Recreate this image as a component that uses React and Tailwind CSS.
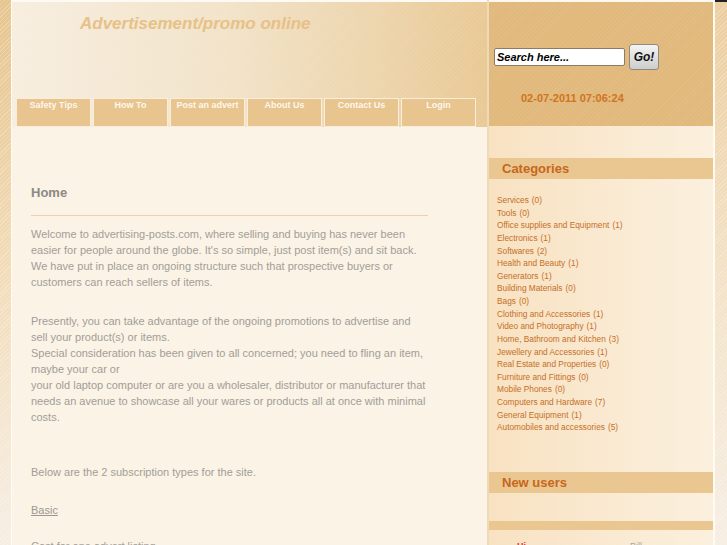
import React from "react";

const navItems = ["Safety Tips", "How To", "Post an advert", "About Us", "Contact Us", "Login"];

const categories = [
  ["Services", 0],
  ["Tools", 0],
  ["Office supplies and Equipment", 1],
  ["Electronics", 1],
  ["Softwares", 2],
  ["Health and Beauty", 1],
  ["Generators", 1],
  ["Building Materials", 0],
  ["Bags", 0],
  ["Clothing and Accessories", 1],
  ["Video and Photography", 1],
  ["Home, Bathroom and Kitchen", 3],
  ["Jewellery and Accessories", 1],
  ["Real Estate and Properties", 0],
  ["Furniture and Fittings", 0],
  ["Mobile Phones", 0],
  ["Computers and Hardware", 7],
  ["General Equipment", 1],
  ["Automobiles and accessories", 5],
];

export default function App() {
  return (
    <div className="w-[727px] h-[545px] overflow-hidden flex bg-[#f7eee0] font-['Liberation_Sans',Arial,sans-serif]">
      {/* left strip */}
      <div className="w-[11px] shrink-0 h-full bg-gradient-to-b from-[#e6c48d] via-[#f2dcb9] to-[#f6eee3]">
        <div className="w-full h-full [background-image:repeating-linear-gradient(135deg,rgba(255,255,255,0.22)_0px,rgba(255,255,255,0.22)_1px,transparent_1px,transparent_3px)]" />
      </div>
      <div className="w-[1px] shrink-0 h-full bg-[#fffaf2]" />

      {/* main column */}
      <div className="w-[475px] shrink-0 h-full flex flex-col overflow-hidden">
        <div className="h-[2px] shrink-0 bg-[#fffaf3]" />
        <div className="h-[125px] shrink-0 flex flex-col [background-image:repeating-linear-gradient(135deg,rgba(255,255,255,0.07)_0px,rgba(255,255,255,0.07)_1px,transparent_1px,transparent_3px),linear-gradient(90deg,#f7eedf,#f2e3c9_45%,#ecd3a9_80%,#e9c995)]">
          <div className="pt-[12px] pl-[68px] text-[17px] leading-[20px] font-bold italic text-[#e7c187]">
            Advertisement/promo online
          </div>
          <div className="mt-auto pl-[4px] flex gap-[2px]">
            {navItems.map((n) => (
              <div
                key={n}
                className="w-[75px] h-[29px] border border-[#f9eedc] bg-[#e8c48e] text-center text-[9px] leading-[11px] pt-[1px] font-bold text-[#fdf7ec]"
              >
                {n}
              </div>
            ))}
          </div>
        </div>
        <div className="flex-1 min-h-0 bg-[#faf3e6] pt-[58px] pl-[19px] text-[#a39e96] text-[11px] leading-[16px]">
          <div className="text-[13px] leading-[16px] font-bold text-[#8d8984]">Home</div>
          <div className="mt-[14px] w-[397px] h-[1px] bg-[#ead2ab]" />
          <p className="mt-[10px] whitespace-nowrap">
            Welcome to advertising-posts.com, where selling and buying has never been
            <br />
            easier for people around the globe. It's so simple, just post item(s) and sit back.
            <br />
            We have put in place an ongoing structure such that prospective buyers or
            <br />
            customers can reach sellers of items.
          </p>
          <p className="mt-[23px] whitespace-nowrap">
            Presently, you can take advantage of the ongoing promotions to advertise and
            <br />
            sell your product(s) or items.
            <br />
            Special consideration has been given to all concerned; you need to fling an item,
            <br />
            maybe your car or
            <br />
            your old laptop computer or are you a wholesaler, distributor or manufacturer that
            <br />
            needs an avenue to showcase all your wares or products all at once with minimal
            <br />
            costs.
          </p>
          <p className="mt-[39px] whitespace-nowrap">Below are the 2 subscription types for the site.</p>
          <p className="mt-[22px] underline text-[#9c978f]">Basic</p>
          <p className="mt-[20px] whitespace-nowrap">Cost for one advert listing</p>
        </div>
      </div>

      <div className="w-[2px] shrink-0 h-full bg-[#ecdab9]" />

      {/* right column */}
      <div className="w-[224px] shrink-0 h-full flex flex-col overflow-hidden">
        <div className="h-[2px] shrink-0 bg-[#fff9ef]" />
        <div className="h-[124px] shrink-0 bg-[#e1b97c] [background-image:repeating-linear-gradient(135deg,rgba(255,255,255,0.05)_0px,rgba(255,255,255,0.05)_1px,transparent_1px,transparent_3px)]">
          <div className="pt-[42px] pl-[5px] flex items-center gap-[4px]">
            <div className="w-[131px] h-[18px] bg-white border border-[#8c7c66] rounded-[2px] pl-[2px] text-[11px] leading-[16px] font-bold italic text-black">
              Search here...
            </div>
            <div className="w-[30px] h-[26px] rounded-[3px] border border-[#8f8a84] bg-gradient-to-b from-[#f4f4f4] to-[#cdcdcd] text-center text-[12px] leading-[24px] font-bold italic text-[#111]">
              Go!
            </div>
          </div>
          <div className="mt-[22px] pl-[32px] text-[11px] leading-[13px] font-bold text-[#d0741e]">
            02-07-2011 07:06:24
          </div>
        </div>
        <div className="flex-1 min-h-0 flex flex-col bg-gradient-to-r from-[#f8e2c2] to-[#fbf0de]">
          <div className="h-[32px] shrink-0" />
          <div className="h-[21px] shrink-0 bg-[#eac790] pl-[13px] text-[13px] leading-[21px] font-bold text-[#c8661c]">
            Categories
          </div>
          <div className="shrink-0 pt-[15px] pl-[8px] text-[8.3px] leading-[12.63px] text-[#c66f26]">
            {categories.map(([name, n]) => (
              <div key={name} className="whitespace-nowrap">
                {name}
                <span className="ml-[3px]">({n})</span>
              </div>
            ))}
          </div>
          <div className="shrink-0 mt-[38px] h-[21px] bg-[#eac790] pl-[13px] text-[13px] leading-[21px] font-bold text-[#c8661c]">
            New users
          </div>
          <div className="h-[28px] shrink-0" />
          <div className="h-[9px] shrink-0 bg-[#eac790]" />
          <div className="shrink-0 pt-[11px] flex text-[9px] leading-[11px] font-bold">
            <span className="pl-[28px] text-[#e0302a]">Hi</span>
            <span className="pl-[104px] text-[#a8a39c] font-normal">Bill</span>
          </div>
        </div>
      </div>

      <div className="w-[2px] shrink-0 h-full bg-[#fffaf2]" />
      {/* right strip */}
      <div className="flex-1 h-full flex flex-col bg-gradient-to-b from-[#ebcd9e] via-[#f3e2c6] to-[#f6eee3]">
        <div className="h-[2px] shrink-0 bg-[#222]" />
        <div className="flex-1 [background-image:repeating-linear-gradient(135deg,rgba(255,255,255,0.22)_0px,rgba(255,255,255,0.22)_1px,transparent_1px,transparent_3px)]" />
      </div>
    </div>
  );
}
